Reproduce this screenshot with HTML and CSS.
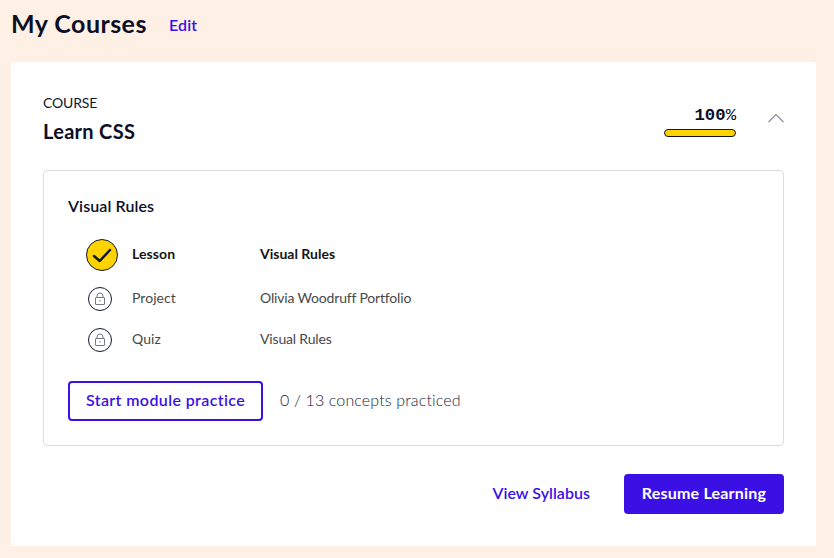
FILE: index.html
```html
<!DOCTYPE html>
<html lang="en">
<head>
<meta charset="utf-8">
<title>My Courses</title>
<link rel="stylesheet" href="styles.css">
</head>
<body>
<header class="page-header">
  <h1 class="page-title">My Courses</h1>
  <a class="edit">Edit</a>
</header>
<main class="card">
  <div class="course-header">
    <div class="course-name">
      <div class="eyebrow">COURSE</div>
      <h2 class="course-title">Learn CSS</h2>
    </div>
    <div class="progress">
      <div class="percent"><b>100</b>%</div>
      <div class="bar"></div>
    </div>
    <svg class="chevron" viewBox="0 0 16 10"><path d="M.5 9 8 1.500 15.500 9"/></svg>
  </div>
  <section class="module">
    <h3 class="module-title">Visual Rules</h3>
    <ul class="items">
      <li class="item done">
        <svg class="icon-done" viewBox="0 0 32 32"><circle cx="16" cy="16" r="15.500"/><path d="m8 17 5.700 5L24 11"/></svg>
        <span class="kind">Lesson</span><span class="name">Visual Rules</span>
      </li>
      <li class="item">
        <svg class="icon-lock" viewBox="0 0 24 24"><circle cx="12" cy="12" r="11.500"/><rect x="7.500" y="10.500" width="9" height="7" rx=".5"/><path d="M9 10.500V9a3 3 0 0 1 6 0v1.500M12 13v1.500"/></svg>
        <span class="kind">Project</span><span class="name">Olivia Woodruff Portfolio</span>
      </li>
      <li class="item">
        <svg class="icon-lock" viewBox="0 0 24 24"><circle cx="12" cy="12" r="11.500"/><rect x="7.500" y="10.500" width="9" height="7" rx=".5"/><path d="M9 10.500V9a3 3 0 0 1 6 0v1.500M12 13v1.500"/></svg>
        <span class="kind">Quiz</span><span class="name">Visual Rules</span>
      </li>
    </ul>
    <div class="practice">
      <button class="btn outline"><span>Start module practice</span></button>
      <span class="practiced">0 / 13 concepts practiced</span>
    </div>
  </section>
  <footer class="actions">
    <a class="syllabus">View Syllabus</a>
    <button class="btn solid"><span>Resume Learning</span></button>
  </footer>
</main>
</body>
</html>
```
FILE: styles.css
```css
* { box-sizing: border-box; margin: 0; padding: 0; }
body { width: 834px; height: 558px; overflow: hidden; background: #fff0e5; color: #10162f; font-family: Lato, sans-serif; font-size: 16px; white-space: nowrap; }
.page-header { display: flex; height: 62px; padding: 7px 0 0 11px; }
.page-title { width: 158px; font-size: 25px; line-height: 32px; font-weight: 700; letter-spacing: .45px; color: #0a0e27; }
.edit { line-height: 36px; font-weight: 600; letter-spacing: .1px; color: #3a10e5; }
.card { width: 805px; height: 484px; margin-left: 11px; padding: 32px; background: #fff; border-radius: 2px 2px 0 0; }
.course-header { display: flex; height: 76px; }
.course-name { flex: 1; }
.eyebrow { font-size: 14px; line-height: 17px; letter-spacing: -.15px; }
.course-title { margin-top: 6px; font-size: 20px; line-height: 28px; font-weight: 700; letter-spacing: .3px; color: #0a0e27; }
.progress { width: 72px; padding-top: 12px; text-align: right; }
.percent { font: 17.300px/20px "Liberation Mono", monospace; color: #0a0e27; }
.bar { height: 8px; margin-top: 3px; border: 1px solid #10162f; border-radius: 4px; background: #ffd300; }
.chevron { width: 16px; height: 10px; margin: 19px 0 0 32px; fill: none; stroke: #888b9b; stroke-width: 1.200; }
.module { height: 276px; padding: 23px 24px 24px; border: 1px solid #dcdcdc; border-radius: 4px; }
.module-title { font-size: 16px; line-height: 24px; font-weight: 600; letter-spacing: .1px; color: #0a0e27; }
.items { margin-top: 18px; list-style: none; }
.item { display: flex; align-items: center; height: 41px; padding-left: 20px; font-size: 14px; letter-spacing: -.17px; color: #484848; }
.item.done { height: 38px; padding: 0 0 0 18px; margin-bottom: 4px; font-weight: 700; letter-spacing: 0; color: #151515; }
.kind { width: 128px; margin-left: 20px; letter-spacing: .05px; }
.kind, .name { padding-bottom: 3px; }
.done .kind { margin-left: 14px; letter-spacing: .1px; }
.icon-done { width: 32px; height: 32px; fill: #ffd300; stroke: #10162f; }
.icon-done path { fill: none; stroke-width: 2.500; stroke-linecap: round; stroke-linejoin: round; }
.icon-lock { width: 24px; height: 24px; fill: none; stroke: #10162f; }
.icon-lock rect, .icon-lock path { stroke: #777987; }
.practice { display: flex; align-items: center; margin-top: 21px; }
.btn { display: flex; align-items: center; justify-content: center; height: 40px; border-radius: 4px; font: 700 16px/24px Lato, sans-serif; padding-bottom: 2px; }
.outline { width: 195px; border: 2px solid #3a10e5; background: #fff; color: #3a10e5; font-weight: 600; letter-spacing: .38px; }
.practiced { margin-left: 17px; padding-bottom: 3px; font-weight: 300; letter-spacing: .14px; color: #20243c; }
.actions { display: flex; justify-content: flex-end; align-items: center; margin-top: 28px; }
.syllabus { margin-right: 34px; padding-bottom: 3px; font-weight: 600; letter-spacing: .03px; color: #3a10e5; }
.solid { width: 160px; border: 0; background: #3a10e5; color: #fff; letter-spacing: .2px; }
```
